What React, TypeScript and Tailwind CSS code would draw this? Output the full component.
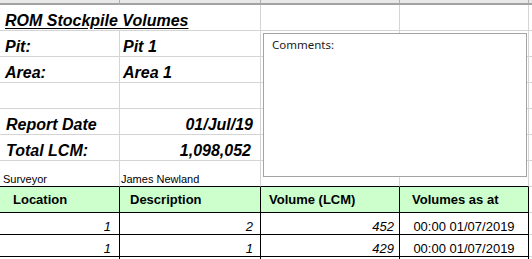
import type { ReactNode } from "react";

// Spreadsheet-style stockpile report: grid of cells plus a floating comments box.
const GRID = "border-[#d4d4d4]";

type CellProps = {
  w: string;
  children?: ReactNode;
  className?: string;
};

const Cell = ({ w, children, className = "" }: CellProps) => (
  <div className={`${w} shrink-0 flex h-full border-r border-b ${className}`}>
    {children}
  </div>
);

const Row = ({ h, children }: { h: string; children: ReactNode }) => (
  <div className={`flex ${h}`}>{children}</div>
);

const label = "text-[16px] leading-[18px] font-bold italic whitespace-nowrap";

const dataRows = [
  { location: "1", description: "2", volume: "452", at: "00:00 01/07/2019" },
  { location: "1", description: "1", volume: "429", at: "00:00 01/07/2019" },
  { location: "", description: "", volume: "", at: "" },
];

export default function App() {
  return (
    <div className="relative w-[532px] h-[259px] overflow-hidden bg-white text-black font-['Liberation_Sans',Arial,sans-serif]">
      {/* strip of the row above, cut off */}
      <Row h="h-[5px]">
        <Cell w="w-[120px]" className="bg-[#e8e8e8] border-r-[#b0b0b0] border-b-2 border-b-[#a2a2a2]" />
        <Cell w="w-[141px]" className="bg-[#e8e8e8] border-r-[#b0b0b0] border-b-2 border-b-[#a2a2a2]" />
        <Cell w="w-[139px]" className="bg-[#e8e8e8] border-r-[#b0b0b0] border-b-2 border-b-[#a2a2a2]" />
        <Cell w="w-[129px]" className="bg-[#e8e8e8] border-r-[#b0b0b0] border-b-2 border-b-[#a2a2a2]" />
        <div className="flex-1 bg-[#e8e8e8] border-b-2 border-b-[#a2a2a2]" />
      </Row>

      <Row h="h-[26px]">
        <div className={`w-[120px] shrink-0 flex items-end pl-[5px] border-b ${GRID}`}>
          <span className={`${label} underline underline-offset-[2px]`}>ROM Stockpile Volumes</span>
        </div>
        <Cell w="w-[141px]" className={GRID} />
        <Cell w="w-[139px]" className={GRID} />
        <Cell w="w-[129px]" className={GRID} />
        <div className={`flex-1 border-b ${GRID}`} />
      </Row>

      {[
        ["Pit:", "Pit 1"],
        ["Area:", "Area 1"],
        ["", ""],
      ].map(([k, v], i) => (
        <Row key={i} h="h-[26px]">
          <Cell w="w-[120px]" className={`${GRID} items-end pl-[5px]`}>
            <span className={label}>{k}</span>
          </Cell>
          <Cell w="w-[141px]" className={`${GRID} items-end pl-[3px]`}>
            <span className={label}>{v}</span>
          </Cell>
          <Cell w="w-[139px]" className={GRID} />
          <Cell w="w-[129px]" className={GRID} />
          <div className={`flex-1 border-b ${GRID}`} />
        </Row>
      ))}

      {[
        ["Report Date", "01/Jul/19", "pr-[7px]"],
        ["Total LCM:", "1,098,052", "pr-[9px]"],
      ].map(([k, v, pr]) => (
        <Row key={k} h="h-[26px]">
          <Cell w="w-[120px]" className={`${GRID} items-end pl-[6px]`}>
            <span className={label}>{k}</span>
          </Cell>
          <Cell w="w-[141px]" className={`${GRID} items-end justify-end ${pr}`}>
            <span className={label}>{v}</span>
          </Cell>
          <Cell w="w-[139px]" className={GRID} />
          <Cell w="w-[129px]" className={GRID} />
          <div className={`flex-1 border-b ${GRID}`} />
        </Row>
      ))}

      <Row h="h-[26px]">
        <Cell w="w-[120px]" className={`${GRID} border-b-black items-end pl-[3px]`}>
          <span className="text-[11px] leading-[13px]">Surveyor</span>
        </Cell>
        <Cell w="w-[141px]" className={`${GRID} border-b-black items-end pl-[1px]`}>
          <span className="text-[11px] leading-[13px]">James Newland</span>
        </Cell>
        <Cell w="w-[139px]" className={`${GRID} border-b-black`} />
        <Cell w="w-[129px]" className={`${GRID} border-b-black`} />
        <div className={`flex-1 border-b ${GRID}`} />
      </Row>

      {/* table header */}
      <Row h="h-[26px]">
        {[
          ["w-[120px]", "pl-[13px]", "Location"],
          ["w-[141px]", "pl-[10px]", "Description"],
          ["w-[139px]", "pl-[8px]", "Volume (LCM)"],
          ["w-[129px]", "pl-[12px]", "Volumes as at"],
        ].map(([w, pl, t]) => (
          <Cell key={t} w={w} className={`border-black bg-[#ccffcc] items-center ${pl}`}>
            <span className="text-[13px] leading-[15px] font-bold whitespace-nowrap">{t}</span>
          </Cell>
        ))}
        <div className={`flex-1 border-b ${GRID}`} />
      </Row>

      {dataRows.map((r, i) => (
        <Row key={i} h="h-[22px]">
          <Cell w="w-[120px]" className="border-black items-end justify-end pr-[8px]">
            <span className="text-[13px] leading-[15px] italic">{r.location}</span>
          </Cell>
          <Cell w="w-[141px]" className="border-black items-end justify-end pr-[7px]">
            <span className="text-[13px] leading-[15px] italic">{r.description}</span>
          </Cell>
          <Cell w="w-[139px]" className="border-black items-end justify-end pr-[5px]">
            <span className="text-[13px] leading-[15px] italic">{r.volume}</span>
          </Cell>
          <Cell w="w-[129px]" className="border-black items-end justify-center">
            <span className="text-[13px] leading-[15px] whitespace-nowrap">{r.at}</span>
          </Cell>
          <div className={`flex-1 border-b ${GRID}`} />
        </Row>
      ))}

      {/* floating comments text box */}
      <div className="absolute left-[263px] top-[33px] w-[264px] h-[144px] bg-white border border-[#a3a3a3] pt-[3px] pl-[8px] leading-[14px]">
        <span className="text-[11.5px] text-[#1a1a1a] font-['Noto_Sans',sans-serif]">Comments:</span>
      </div>
    </div>
  );
}
